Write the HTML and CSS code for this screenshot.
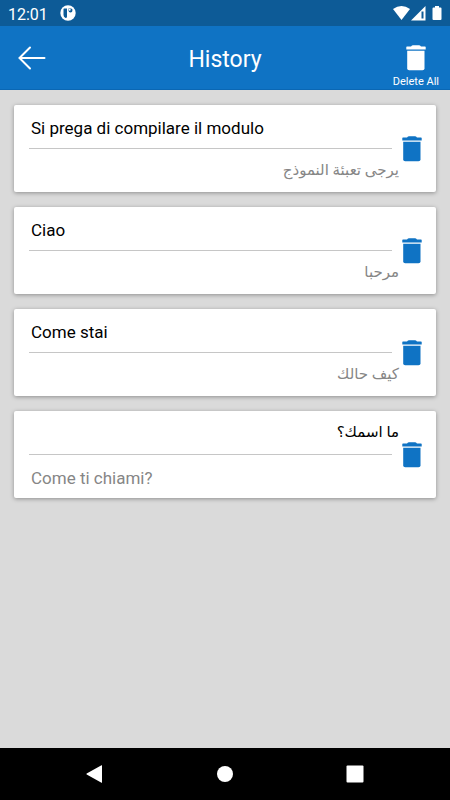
FILE: index.html
```html
<!DOCTYPE html>
<html lang="en">
<head>
<meta charset="utf-8">
<meta name="viewport" content="width=device-width, initial-scale=1">
<title>History</title>
<link rel="stylesheet" href="styles.css">
</head>
<body>
<svg class="symbols" aria-hidden="true">
  <symbol id="trash" viewBox="0 0 20 26">
    <path d="M5 1.500Q6 .3 7 .3H13Q14 .3 15 1.500H19Q19.700 1.500 19.700 2V4.500H.3V2Q.3 1.500 1 1.500Z"/>
    <path d="M1.200 5.700H18.500V23.500Q18.500 25.300 16.500 25.300H3.200Q1.200 25.300 1.200 23.500Z"/>
  </symbol>
</svg>
<div class="status">
  <span class="time">12:01</span>
  <svg class="app-mark" viewBox="0 0 16 16" aria-hidden="true">
    <circle cx="8" cy="8" r="7.700" fill="#fff"/>
    <path d="M4 3.500H7V11.500Q7 13 5.500 13Q3.500 12 3.500 10V4Z" fill="#0d5b97"/>
    <path d="M8.500 3.500H11Q12.500 3.500 12.500 5Q12.500 7.500 10.500 7.500Q8.500 7.500 8.500 5.500Z" fill="#0d5b97"/>
    <circle cx="9.700" cy="4.700" r="1" fill="#fff"/>
  </svg>
  <svg class="signals" viewBox="0 0 50 16" aria-hidden="true">
    <path d="M1 4Q9.500-2 18 4L9.500 15Z" fill="#fff"/>
    <path d="M19 15.500L33.500 1V15.500Z" fill="#fff"/>
    <path d="M29.500 6.500H31.500V13.500H29.500Z" fill="#0d5b97"/>
    <path d="M43 1H47V2.500H48.500Q49.500 2.500 49.500 3.500V14Q49.500 15 48.500 15H41.500Q40.500 15 40.500 14V3.500Q40.500 2.500 41.500 2.500H43Z" fill="#fff"/>
  </svg>
</div>
<header class="toolbar">
  <button class="back" type="button" aria-label="Back">
    <svg viewBox="0 0 28 24" aria-hidden="true"><path d="M12 1.500L1.500 12L12 22.500M1.500 12H26.500"/></svg>
  </button>
  <h1>History</h1>
  <button class="delete-all" type="button">
    <svg class="trash" aria-hidden="true"><use href="#trash"/></svg>
    <span>Delete All</span>
  </button>
</header>
<main class="history">
  <article class="card">
    <div class="phrases">
      <p class="source" lang="it">Si prega di compilare il modulo</p>
      <hr>
      <p class="target" lang="ar" dir="rtl">يرجى تعبئة النموذج</p>
    </div>
    <button class="delete" type="button" aria-label="Delete"><svg class="trash" aria-hidden="true"><use href="#trash"/></svg></button>
  </article>
  <article class="card">
    <div class="phrases">
      <p class="source" lang="it">Ciao</p>
      <hr>
      <p class="target" lang="ar" dir="rtl">مرحبا</p>
    </div>
    <button class="delete" type="button" aria-label="Delete"><svg class="trash" aria-hidden="true"><use href="#trash"/></svg></button>
  </article>
  <article class="card">
    <div class="phrases">
      <p class="source" lang="it">Come stai</p>
      <hr>
      <p class="target" lang="ar" dir="rtl">كيف حالك</p>
    </div>
    <button class="delete" type="button" aria-label="Delete"><svg class="trash" aria-hidden="true"><use href="#trash"/></svg></button>
  </article>
  <article class="card">
    <div class="phrases">
      <p class="source" lang="ar" dir="rtl">ما اسمك؟</p>
      <hr>
      <p class="target" lang="it">Come ti chiami?</p>
    </div>
    <button class="delete" type="button" aria-label="Delete"><svg class="trash" aria-hidden="true"><use href="#trash"/></svg></button>
  </article>
</main>
<nav class="system-nav" aria-label="System">
  <button type="button" aria-label="Back"><svg viewBox="0 0 18 18" aria-hidden="true"><path d="M16 .5V17.500Q16 18 15.500 17.700L.7 9.500Q0 9 .7 8.500L15.500 .3Q16 0 16 .5Z"/></svg></button>
  <button type="button" aria-label="Home"><svg viewBox="0 0 18 18" aria-hidden="true"><circle cx="9" cy="9" r="8"/></svg></button>
  <button type="button" aria-label="Recent apps"><svg viewBox="0 0 18 18" aria-hidden="true"><rect x=".5" y=".5" width="17" height="17" rx="1"/></svg></button>
</nav>
</body>
</html>
```

FILE: styles.css
```css
* {
  box-sizing: border-box;
}

body {
  margin: 0;
  min-height: 100vh;
  display: flex;
  flex-direction: column;
  background: #dadada;
  font-family: Roboto, "DejaVu Sans", sans-serif;
}

button {
  padding: 0;
  border: 0;
  background: none;
  color: inherit;
  font: inherit;
  cursor: pointer;
}

svg {
  display: block;
}

.symbols {
  position: absolute;
  width: 0;
  height: 0;
}

.trash {
  width: 20px;
  height: 26px;
  fill: currentColor;
}

.status {
  display: flex;
  align-items: center;
  height: 26px;
  padding: 0 8px;
  background: #0d5b97;
  color: #fff;
}

.time {
  padding-top: 2px;
  font-size: 16px;
}

.app-mark {
  width: 16px;
  height: 16px;
  margin-left: 12px;
}

.signals {
  width: 50px;
  height: 16px;
  margin-left: auto;
}

.toolbar {
  display: grid;
  grid-template-columns: 1fr auto 1fr;
  align-items: center;
  height: 64px;
  padding: 0 11px 0 18px;
  background: #0f73c4;
  border-bottom: 1px solid #0a67b4;
  color: #fff;
}

.toolbar h1 {
  margin: 0 0 0 -7px;
  padding-top: 4px;
  font-size: 23px;
  font-weight: 400;
}

.back {
  justify-self: start;
}

.back svg {
  width: 28px;
  height: 24px;
  fill: none;
  stroke: #fff;
  stroke-width: 2;
  stroke-linecap: round;
}

.delete-all {
  justify-self: end;
  display: flex;
  flex-direction: column;
  align-items: center;
  gap: 4px;
  padding-top: 18px;
  font-size: 11px;
  line-height: 14px;
}

.history {
  flex: 1;
  display: flex;
  flex-direction: column;
  gap: 15px;
  padding: 15px 14px;
}

.card {
  display: flex;
  align-items: center;
  padding: 0 14px 0 15px;
  background: #fff;
  border-radius: 2px;
  box-shadow: 0 1px 4px rgba(0, 0, 0, 0.35);
}

.phrases {
  flex: 1;
  margin-right: 10px;
}

.phrases p {
  margin: 0;
  padding: 3px 2px 0;
  font-size: 17px;
  line-height: 40px;
}

.phrases p[dir="rtl"] {
  margin-right: -7px;
  padding: 0;
  font-size: 15px;
  line-height: 43px;
}

.phrases hr {
  height: 1px;
  margin: 0;
  border: 0;
  background: #c6c6c6;
}

.source {
  color: #000;
}

.target {
  color: #868686;
}

.delete {
  color: #0f73c4;
}

.system-nav {
  display: grid;
  grid-template-columns: repeat(3, 130px);
  justify-content: center;
  height: 52px;
  background: #000;
}

.system-nav button {
  display: grid;
  place-items: center;
}

.system-nav svg {
  width: 18px;
  height: 18px;
  fill: #fff;
}
```
